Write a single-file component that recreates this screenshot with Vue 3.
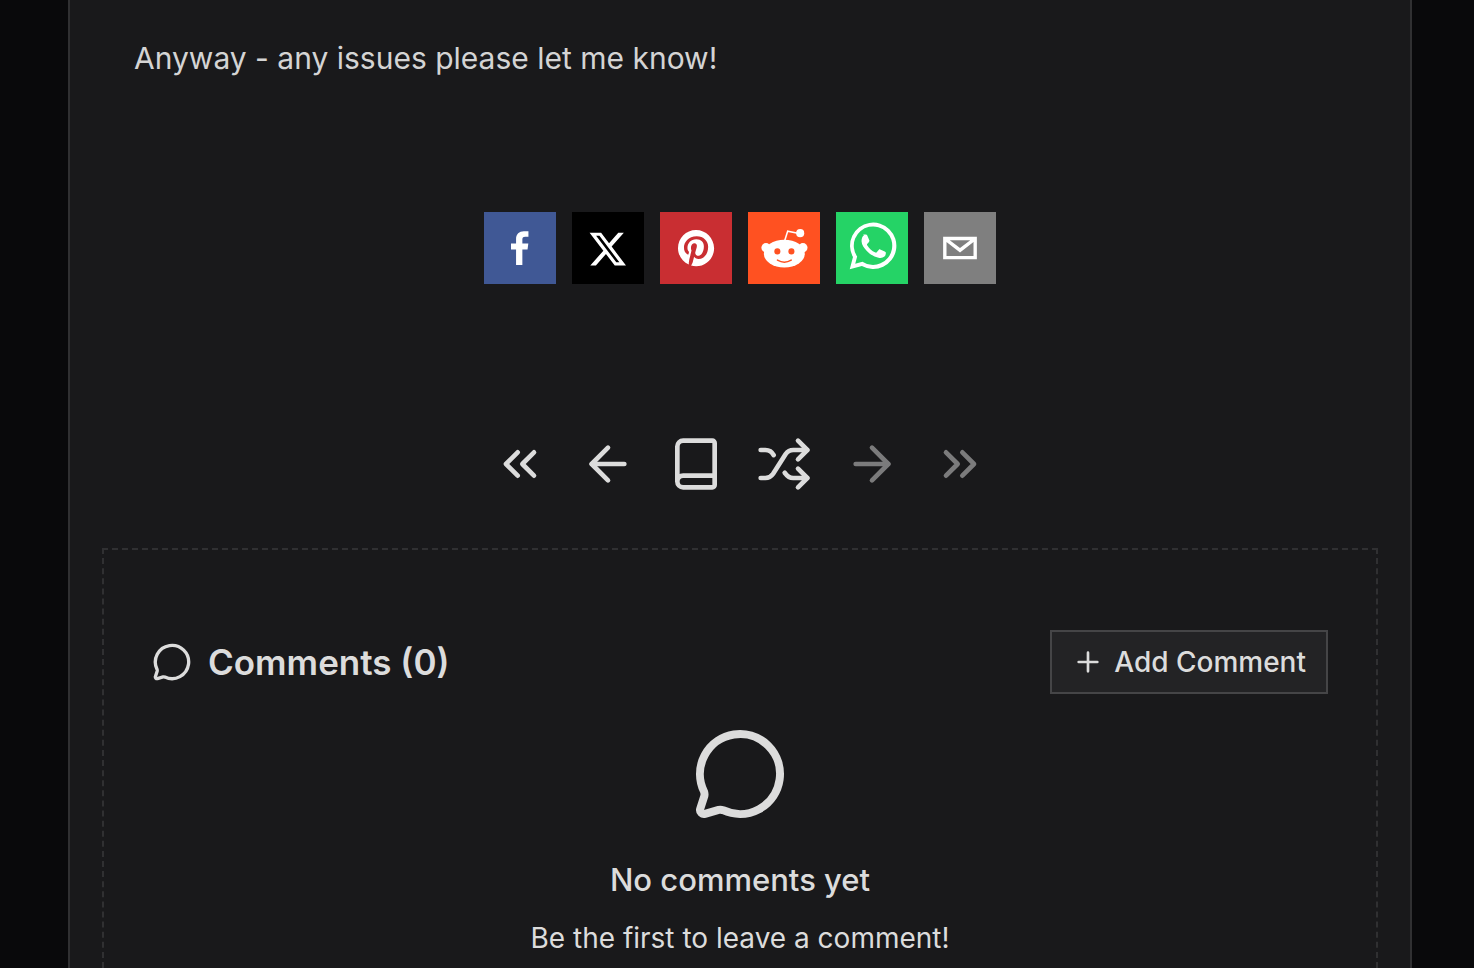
<template>
  <div class="page">
    <main class="panel">
      <p class="post-text">Anyway - any issues please let me know!</p>

      <div class="share">
        <a href="#" class="share-link facebook" aria-label="Share on Facebook">
          <svg viewBox="0 0 64 64">
            <path d="M34.1,47V33.3h4.6l0.7-5.3h-5.3v-3.4c0-1.5,0.4-2.6,2.6-2.6l2.8,0v-4.8c-0.5-0.1-2.2-0.2-4.1-0.2 c-4.1,0-6.9,2.5-6.9,7V28H24v5.3h4.5V47H34.1z" />
          </svg>
        </a>
        <a href="#" class="share-link x" aria-label="Share on X">
          <svg viewBox="0 0 64 64">
            <path d="M 41.116 18.375 h 4.962 l -10.8405 12.39 l 12.753 16.86 H 38.005 l -7.821 -10.2255 L 21.235 47.625 H 16.27 l 11.595 -13.2525 L 15.631 18.375 H 25.87 l 7.0695 9.3465 z m -1.7415 26.28 h 2.7495 L 24.376 21.189 H 21.4255 z" />
          </svg>
        </a>
        <a href="#" class="share-link pinterest" aria-label="Share on Pinterest">
          <svg viewBox="0 0 64 64">
            <path d="M32,16c-8.8,0-16,7.2-16,16c0,6.6,3.9,12.2,9.6,14.7c0-1.1,0-2.5,0.3-3.7 c0.3-1.3,2.1-8.7,2.1-8.7s-0.5-1-0.5-2.5c0-2.4,1.4-4.1,3.1-4.1c1.5,0,2.2,1.1,2.2,2.4c0,1.5-0.9,3.7-1.4,5.7 c-0.4,1.7,0.9,3.1,2.5,3.1c3,0,5.1-3.9,5.1-8.5c0-3.5-2.4-6.1-6.7-6.1c-4.9,0-7.9,3.6-7.9,7.7c0,1.4,0.4,2.4,1.1,3.1 c0.3,0.3,0.3,0.5,0.2,0.9c-0.1,0.3-0.3,1-0.3,1.3c-0.1,0.4-0.4,0.6-0.8,0.4c-2.2-0.9-3.3-3.4-3.3-6.1c0-4.5,3.8-10,11.4-10 c6.1,0,10.1,4.4,10.1,9.2c0,6.3-3.5,11-8.6,11c-1.7,0-3.4-0.9-3.9-2c0,0-0.9,3.7-1.1,4.4c-0.3,1.2-1,2.5-1.6,3.4 c1.4,0.4,3,0.7,4.5,0.7c8.8,0,16-7.2,16-16C48,23.2,40.8,16,32,16z" />
          </svg>
        </a>
        <a href="#" class="share-link reddit" aria-label="Share on Reddit">
          <svg viewBox="0 0 64 64">
            <ellipse cx="32.3" cy="37" rx="18.2" ry="12.3" />
            <circle cx="16" cy="31.7" r="4.1" />
            <circle cx="48.8" cy="31.7" r="4.1" />
            <circle cx="46.4" cy="18.8" r="3.6" />
            <path class="antenna" d="M32.6 25.5 35.3 17l9 1.8" />
            <circle class="hole" cx="26.1" cy="35" r="2.7" />
            <circle class="hole" cx="38.6" cy="35" r="2.7" />
            <path class="smile" d="M26.2 42.8q6.1 3.6 12.2 0" />
          </svg>
        </a>
        <a href="#" class="share-link whatsapp" aria-label="Share on WhatsApp">
          <svg viewBox="0 0 64 64">
            <path fill-rule="evenodd" d="M12.2 50.8 15.1 40.1A20.6 20.6 0 1 1 23 48zM17.1 45.9 23.5 44.2A17.1 17.1 0 1 0 18.8 39.6z" />
            <path d="M24 20.4c.4-.4.9-.5 1.500-.5h1c.4 0 .9 0 1.300.9l1.800 4.200c.1.300.2.700 0 1-.5 1-1.100 1.600-1.700 2.300-.3.300-.5.600-.2 1.200 1.800 3 4 5 7.300 6.500.5.200.9.200 1.200-.2l1.900-2.300c.4-.5.700-.4 1.200-.2l4 1.900c.5.300.9.400 1 .700.2 1.200-.3 2.900-1.200 3.700-1.200 1-2.800 1.500-4.500 1.200-4.500-.8-8-2.900-11.200-6.200-2.300-2.500-4.600-5.500-4.700-8.700 0-2.300.5-3.900 2.300-5.500z" />
          </svg>
        </a>
        <a href="#" class="share-link email" aria-label="Share by email">
          <svg viewBox="0 0 64 64">
            <path d="M17,22v20h30V22H17z M41.1,25L32,32.1L22.9,25H41.1z M20,39V26.6l12,9.3l12-9.3V39H20z" />
          </svg>
        </a>
      </div>

      <nav class="pager">
        <button
          v-for="item in navItems"
          :key="item.label"
          class="nav-btn"
          :aria-label="item.label"
          :disabled="item.disabled"
        >
          <svg class="icon" viewBox="0 0 24 24">
            <path v-for="d in item.paths" :key="d" :d="d" />
          </svg>
        </button>
      </nav>

      <section class="comments">
        <div class="comments-header">
          <h2>
            <svg class="icon" viewBox="0 0 24 24"><path :d="bubble" /></svg>
            Comments ({{ comments.length }})
          </h2>
          <button class="add-btn">
            <svg class="icon" viewBox="0 0 24 24"><path d="M5 12h14M12 5v14" /></svg>
            Add Comment
          </button>
        </div>
        <div v-if="!comments.length" class="empty">
          <svg class="icon" viewBox="0 0 24 24"><path :d="bubble" /></svg>
          <h3>No comments yet</h3>
          <p>Be the first to leave a comment!</p>
        </div>
      </section>
    </main>
  </div>
</template>

<script setup>
import { ref } from 'vue';

const comments = ref([]);

const bubble = 'M2.992 16.342a2 2 0 0 1 .094 1.167l-1.065 3.29a1 1 0 0 0 1.236 1.168l3.413-.998a2 2 0 0 1 1.099.092 10 10 0 1 0-4.777-4.719';

const navItems = [
  { label: 'First', paths: ['m11 17-5-5 5-5', 'm18 17-5-5 5-5'] },
  { label: 'Previous', paths: ['m12 19-7-7 7-7', 'M19 12H5'] },
  {
    label: 'Archive',
    paths: ['M4 19.5v-15A2.5 2.5 0 0 1 6.5 2H19a1 1 0 0 1 1 1v18a1 1 0 0 1-1 1H6.5a1 1 0 0 1 0-5H20'],
  },
  {
    label: 'Random',
    paths: [
      'm18 14 4 4-4 4',
      'm18 2 4 4-4 4',
      'M2 18h1.973a4 4 0 0 0 3.3-1.7l5.454-8.6a4 4 0 0 1 3.3-1.7H22',
      'M2 6h1.972a4 4 0 0 1 3.6 2.2',
      'M22 18h-6.041a4 4 0 0 1-3.3-1.8l-.359-.45',
    ],
  },
  { label: 'Next', paths: ['M5 12h14', 'm12 5 7 7-7 7'], disabled: true },
  { label: 'Last', paths: ['m6 17 5-5-5-5', 'm13 17 5-5-5-5'], disabled: true },
];
</script>

<style>
body {
  margin: 0;
  background: #09090b;
}
</style>

<style scoped>
.page {
  display: flex;
  min-height: 100vh;
  padding: 0 62px 0 68px;
  color: #dcdcdc;
  font-family: Inter, 'Liberation Sans', sans-serif;
}

.panel {
  flex: 1;
  display: flex;
  flex-direction: column;
  box-sizing: border-box;
  padding: 0 32px;
  background: #19191b;
  border: 2px solid #303032;
  border-width: 0 2px;
}

.post-text {
  margin: 32px 32px 128px;
  font-size: 30px;
  line-height: 52px;
  color: #d4d4d4;
}

.share,
.pager {
  display: flex;
  justify-content: center;
  gap: 16px;
}

.share-link {
  width: 72px;
  height: 72px;
}

.share-link svg {
  display: block;
  fill: white;
}

.facebook {
  background: #405895;
}

.x {
  background: #000;
}

.pinterest {
  background: #c92e32;
}

.reddit {
  background: #ff5121;
}

.reddit .hole {
  fill: #ff5121;
}

.reddit .smile,
.reddit .antenna {
  fill: none;
  stroke: #ff5121;
  stroke-width: 1.4;
  stroke-linecap: round;
}

.reddit .antenna {
  stroke: white;
}

.whatsapp {
  background: #25d366;
}

.email {
  background: #7f7f7f;
}

.icon {
  flex: none;
  fill: none;
  stroke: currentColor;
  stroke-width: 2;
  stroke-linecap: round;
  stroke-linejoin: round;
}

.pager {
  margin: 144px 0 48px;
}

.nav-btn {
  display: flex;
  align-items: center;
  justify-content: center;
  width: 72px;
  height: 72px;
  padding: 0;
  border: none;
  background: none;
  color: inherit;
}

.nav-btn:disabled {
  color: #7b7b7c;
}

.nav-btn .icon {
  width: 56px;
  height: 56px;
}

.comments {
  flex: 1;
  padding: 80px 48px 0;
  border: 2px dashed #303032;
  border-bottom: none;
}

.comments-header {
  display: flex;
  align-items: center;
  justify-content: space-between;
}

h2 {
  display: flex;
  align-items: center;
  gap: 16px;
  margin: 0;
  font-size: 35px;
  line-height: 40px;
  font-weight: 600;
}

h2 .icon {
  width: 40px;
  height: 40px;
}

.add-btn {
  display: flex;
  align-items: center;
  gap: 10px;
  height: 64px;
  padding: 0 20px;
  border: 2px solid #454547;
  background: #232325;
  color: inherit;
  font-family: inherit;
  font-size: 28px;
  font-weight: 500;
}

.add-btn .icon {
  width: 32px;
  height: 32px;
}

.empty {
  display: flex;
  flex-direction: column;
  align-items: center;
  padding-top: 32px;
}

.empty .icon {
  width: 96px;
  height: 96px;
}

h3 {
  margin: 34px 0 14px;
  font-size: 31px;
  line-height: 48px;
  font-weight: 500;
}

.empty p {
  margin: 0;
  font-size: 28px;
  line-height: 40px;
}
</style>
